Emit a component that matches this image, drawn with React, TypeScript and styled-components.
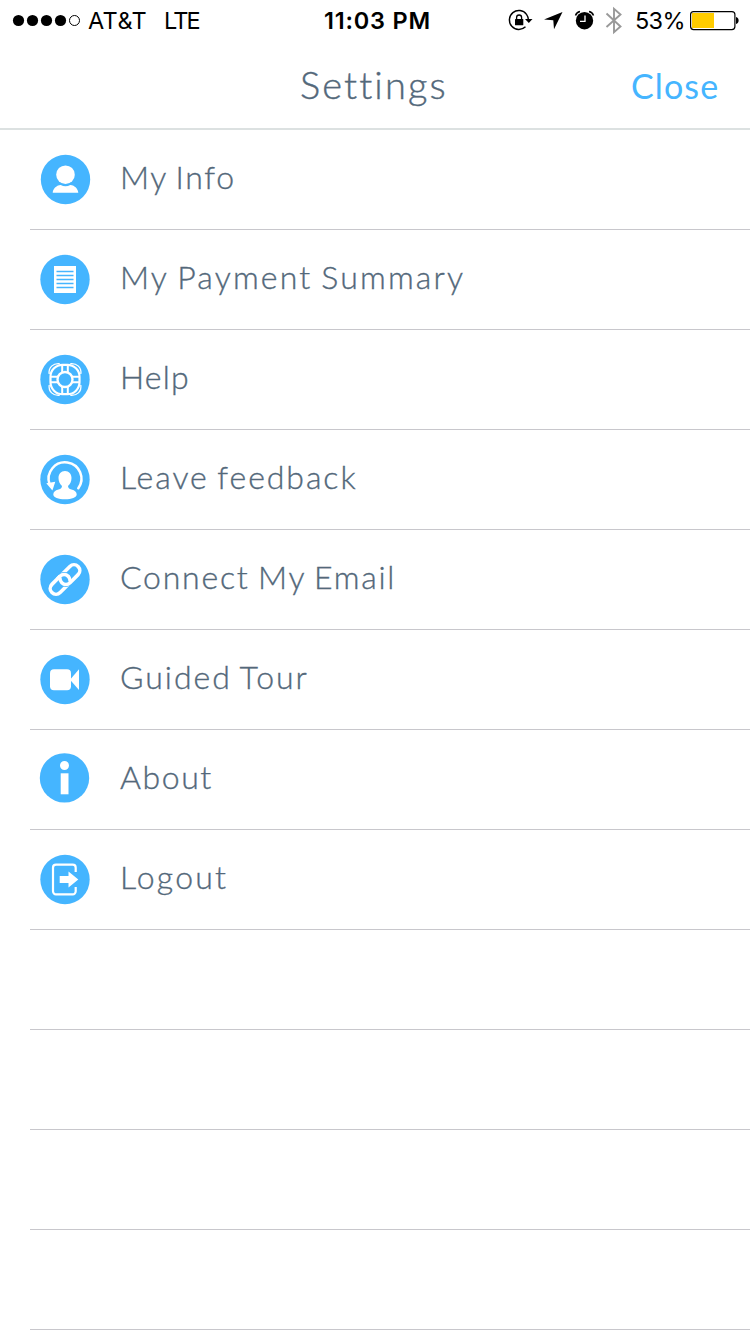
import React from "react";
import styled, { createGlobalStyle } from "styled-components";

const BLUE = "#45b5ff";

const GlobalStyle = createGlobalStyle`
  body { margin: 0; background: #fff; }
  * { box-sizing: border-box; }
`;

const Screen = styled.main`
  width: 750px;
  height: 1334px;
  overflow: hidden;
  background: #fff;
  color: #53687a;
  font-family: Lato, "Open Sans", sans-serif;
`;

const StatusBar = styled.div`
  display: flex;
  align-items: center;
  height: 40px;
  padding-left: 13px;
  color: #000;
  font-family: Inter, "Liberation Sans", sans-serif;
`;

const StatusText = styled.span<{ $width: number; $weight?: number; $spacing?: number; $gap?: number }>`
  flex: none;
  width: ${(p) => p.$width}px;
  margin-left: ${(p) => p.$gap ?? 0}px;
  padding-top: 2px;
  font-size: 23.5px;
  line-height: 40px;
  white-space: nowrap;
  font-weight: ${(p) => p.$weight ?? 400};
  letter-spacing: ${(p) => p.$spacing ?? 0}px;
`;

const Glyph = styled.svg<{ $gap?: number }>`
  display: block;
  flex: none;
  overflow: visible;
  margin-left: ${(p) => p.$gap ?? 0}px;
`;

const Header = styled.header`
  display: grid;
  grid-template-columns: 1fr 146px 1fr;
  height: 90px;
  border-bottom: 2px solid #dce1e1;
`;

const Title = styled.h1`
  grid-column: 2;
  margin: 0 0 0 -2px;
  font-size: 38px;
  font-weight: 300;
  line-height: 88px;
  letter-spacing: 2.1px;
  white-space: nowrap;
  -webkit-text-stroke: 0.4px currentColor;
`;

const CloseButton = styled.button`
  justify-self: end;
  width: 89px;
  height: 88px;
  margin-right: 30px;
  padding: 3px 0 0;
  border: 0;
  background: none;
  color: ${BLUE};
  font: 400 34px/85px Lato, sans-serif;
  letter-spacing: 1.1px;
  text-align: left;
  white-space: nowrap;
`;

const List = styled.ul`
  margin: 0;
  padding: 0 0 0 30px;
  list-style: none;
`;

const Row = styled.li`
  display: flex;
  align-items: center;
  height: 100px;
  padding-left: 10px;
  border-bottom: 1px solid #c8c7cc;
`;

const Label = styled.span<{ $spacing: number }>`
  margin-left: 30px;
  padding-bottom: 5px;
  font-size: 32px;
  font-weight: 300;
  line-height: 40px;
  letter-spacing: ${(p) => p.$spacing}px;
  word-spacing: -2px;
  white-space: nowrap;
  -webkit-text-stroke: 0.35px currentColor;
`;

const Badge = ({ cx = 25, cy = 24.5, children }: { cx?: number; cy?: number; children: React.ReactNode }) => (
  <Glyph width="50" height="50" viewBox="0 0 50 50" fill="#fff">
    <circle cx={cx} cy={cy} r="24.7" fill={BLUE} />
    {children}
  </Glyph>
);

const InfoIcon = (
  <Badge cx={25.5}>
    <circle cx="25.5" cy="19.7" r="9.3" />
    <path d="M12.7 37.8c.3-4 3.3-7.3 8-7.8 3 1.6 6.6 1.6 9.6 0 4.7.5 7.7 3.8 8 7.8z" />
  </Badge>
);

const PaymentIcon = (
  <Badge>
    <path d="M14 11h22v27H14z" />
    <path d="M16.5 16.5h17M16.5 20.5h17M16.5 24.5h17M16.5 28.5h17M16.5 32.5h17" stroke={BLUE} strokeWidth="1.4" />
  </Badge>
);

const HelpIcon = (
  <Badge>
    <g fill="none" stroke="#fff">
      <rect x="10.5" y="9.8" width="29" height="29.4" rx="12" strokeWidth="2.2" />
      <circle cx="25" cy="24.5" r="7.5" strokeWidth="2.4" />
      <path d="M22.2 10v7.8M27.8 10v7.8M22.2 31.2V39M27.8 31.2V39M10.5 21.7h7.8M10.5 27.3h7.8M31.7 21.7h7.8M31.7 27.3h7.8" strokeWidth="2" />
      <path d="M9.2 19c-1-6.5 4-11 10.5-10.3M40.8 19c1-6.5-4-11-10.5-10.3M9.2 30c-1 6.5 4 11 10.5 10.3M40.8 30c1 6.5-4 11-10.5 10.3" strokeWidth="1.3" />
    </g>
  </Badge>
);

const FeedbackIcon = (
  <Badge>
    <path d="M25 16c4 0 6.500 3 6.500 7 0 3.500-1.500 6.500-3.500 8 .2 2 1 2.700 3.500 3.500 3.500 1 5.200 2.500 5.200 5 0 3-5 4.800-11.700 4.800s-11.700-1.800-11.700-4.800c0-2.500 1.700-4 5.200-5 2.500-.8 3.300-1.500 3.500-3.500-2-1.500-3.500-4.500-3.500-8 0-4 2.500-7 6.500-7z" />
    <path d="M38.3 33.3A16.4 16.4 0 1 0 9.5 29" fill="none" stroke="#fff" strokeWidth="2.5" strokeLinecap="round" />
    <path d="M6.3 28.2l9-1.5-2.9 8.7z" />
  </Badge>
);

const LinkIcon = (
  <Badge>
    <g transform="translate(25 24.5) rotate(-45)" fill="none">
      <rect x="-18.5" y="-5.8" width="23" height="11.6" rx="5.8" stroke="#fff" strokeWidth="3.6" />
      <path d="M-4.5 0a5.8 5.8 0 0 0 5.8 5.800" stroke={BLUE} strokeWidth="5" />
      <rect x="-4.5" y="-5.8" width="23" height="11.6" rx="5.8" stroke="#fff" strokeWidth="3.6" />
      <path d="M-1.3-5.8a5.8 5.8 0 0 1 5.8 5.8" stroke={BLUE} strokeWidth="5" />
      <path d="M-5-5.8h3.7a5.8 5.8 0 0 1 5.8 5.8v.5" stroke="#fff" strokeWidth="3.6" />
    </g>
  </Badge>
);

const VideoIcon = (
  <Badge>
    <rect x="10" y="14.3" width="21" height="21" rx="4" />
    <path d="M30 24.7l9-10.4v20.7z" />
  </Badge>
);

const AboutIcon = (
  <Badge cx={24.5} cy={22.9}>
    <circle cx="24.5" cy="10.5" r="4.5" />
    <path d="M20.7 18.3h7.800v21h-7.800z" />
  </Badge>
);

const LogoutIcon = (
  <Badge>
    <path d="M35.7 17v-4.300a3 3 0 0 0-3-3H16a3 3 0 0 0-3 3v23.600a3 3 0 0 0 3 3h16.700a3 3 0 0 0 3-3V32" fill="none" stroke="#fff" strokeWidth="2.2" />
    <path d="M19.7 21h8.800v-4.500l9.800 8-9.800 8V28h-8.800z" />
  </Badge>
);

const items = [
  { label: "My Info", icon: InfoIcon, spacing: 1.65 },
  { label: "My Payment Summary", icon: PaymentIcon, spacing: 2.18 },
  { label: "Help", icon: HelpIcon, spacing: 1.2 },
  { label: "Leave feedback", icon: FeedbackIcon, spacing: 1.95 },
  { label: "Connect My Email", icon: LinkIcon, spacing: 1.77 },
  { label: "Guided Tour", icon: VideoIcon, spacing: 2 },
  { label: "About", icon: AboutIcon, spacing: 1.6 },
  { label: "Logout", icon: LogoutIcon, spacing: 2.2 },
];

export default function App() {
  return (
    <Screen>
      <GlobalStyle />
      <StatusBar>
        <Glyph width="68" height="40" viewBox="0 0 68 40">
          {[5.5, 19.5, 33.5, 47.5].map((x) => (
            <circle key={x} cx={x} cy="20.5" r="5.6" />
          ))}
          <circle cx="61.5" cy="20.5" r="5" fill="none" stroke="#000" />
        </Glyph>
        <StatusText $width={60} $gap={7} $spacing={0.4}>AT&amp;T</StatusText>
        <StatusText $width={38} $gap={16} $spacing={-1.8}>LTE</StatusText>
        <StatusText $width={108} $gap={122} $weight={600} $spacing={0.8}>11:03 PM</StatusText>
        <Glyph $gap={76} width="120" height="40" viewBox="508 0 120 40">
          <path d="M526.5 14.3A9.5 9.5 0 1 0 525.5 26.8M526.5 14.3q2 2.7 2 6" fill="none" stroke="#000" strokeWidth="1.4" />
          <path d="M525 19h7.500l-3.700 4z" />
          <rect x="515" y="19" width="8.3" height="6.3" rx=".6" />
          <path d="M516.6 19.5v-2a2.5 2.5 0 0 1 5 0v2" fill="none" stroke="#000" strokeWidth="1.3" />
          <path d="M562.5 12L544 19.5l9.300.8.700 9z" />
          <circle cx="584.5" cy="20.7" r="8.7" />
          <path d="M575.5 15.5a6 6 0 0 1 4.500-4M593.500 15.5a6 6 0 0 0-4.500-4" fill="none" stroke="#000" strokeWidth="1.5" />
          <path d="M585 15.5v5.800h-5" fill="none" stroke="#fff" strokeWidth="1.3" />
          <path d="M606.5 13.5l14 13-6.500 5.700V8.800l6.500 5.700-14 12.500" fill="none" stroke="#999" strokeWidth="1.9" />
        </Glyph>
        <StatusText $width={50} $gap={7} $spacing={-0.7}>53%</StatusText>
        <Glyph $gap={4} width="50" height="40" viewBox="689 0 50 40">
          <rect x="690.6" y="11.6" width="44.3" height="18" rx="3" fill="none" stroke="#000" strokeWidth="1.2" />
          <path d="M692 13h22v15h-22z" fill="#fc0" />
          <path d="M736 17c3.5.5 3.5 6.5 0 7z" />
        </Glyph>
      </StatusBar>
      <Header>
        <Title>Settings</Title>
        <CloseButton>Close</CloseButton>
      </Header>
      <List>
        {items.map((item) => (
          <Row key={item.label}>
            {item.icon}
            <Label $spacing={item.spacing}>{item.label}</Label>
          </Row>
        ))}
        <Row />
        <Row />
        <Row />
        <Row />
      </List>
    </Screen>
  );
}
